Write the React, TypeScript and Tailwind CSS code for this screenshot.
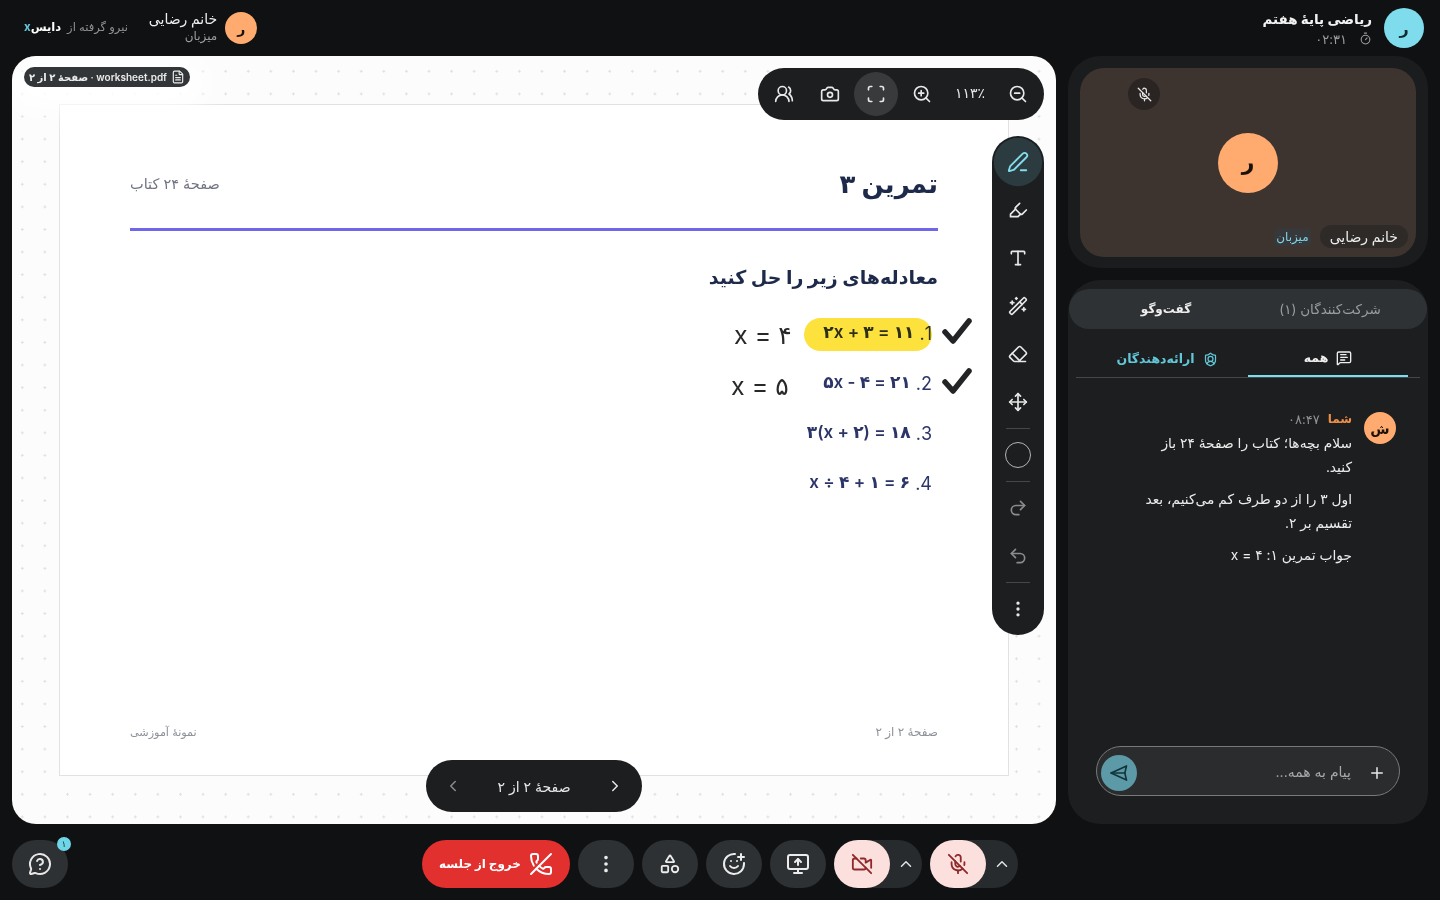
import React from "react";
import {
  UsersRound, Camera, Scan, ZoomIn, ZoomOut, Highlighter, Type, WandSparkles, Eraser, Move,
  Redo2, Undo2, EllipsisVertical, PhoneOff, Shapes, SmilePlus, MonitorUp, VideoOff, MicOff, ChevronUp,
  MessageCircleQuestion, FileText, Timer, MessageSquareText, ShieldUser, Plus, ChevronLeft, ChevronRight,
} from "lucide-react";

function ToolBtn({ children, active, dim }: { children: React.ReactNode; active?: boolean; dim?: boolean }) {
  return (
    <div className={`w-11 h-11 rounded-full flex items-center justify-center shrink-0 ${active ? "bg-[#2b3b40] text-[#82dcec] scale-110" : dim ? "text-[#8a8c8e]" : "text-[#e8e8e8]"}`}>
      {children}
    </div>
  );
}

function BarBtn({ children }: { children: React.ReactNode }) {
  return <div className="w-14 h-12 rounded-full bg-[#2e3133] text-[#ececec] flex items-center justify-center">{children}</div>;
}

function MutedBtn({ children }: { children: React.ReactNode }) {
  return (
    <div className="h-12 w-[88px] rounded-full bg-[#282b2d] flex items-center text-[#e2e2e2]">
      <div className="flex-1 flex items-center justify-center"><ChevronUp size={18} /></div>
      <div className="w-14 h-12 rounded-full bg-[#fbe0dd] text-[#8e2a2a] flex items-center justify-center">{children}</div>
    </div>
  );
}

function Equation({ n, eq }: { n: string; eq: string }) {
  return (
    <div className="h-[50px] flex items-center gap-[5px] pr-[6px] text-[17px] text-[#2c3568]">
      <span className="font-normal text-[18px]">{n}</span>
      <span dir="ltr" className="font-semibold">{eq}</span>
    </div>
  );
}

function Check({ className }: { className: string }) {
  return (
    <svg className={`absolute ${className}`} width="30" height="28" viewBox="0 0 30 28" fill="none">
      <path d="M3 15 L11 24 L27 4" stroke="#222426" strokeWidth="5.5" strokeLinecap="round" strokeLinejoin="round" />
    </svg>
  );
}

export default function App() {
  return (
    <div dir="rtl" className="w-[1440px] h-[900px] overflow-hidden bg-[#101112] text-white flex flex-col font-[family-name:Inter,'Noto_Sans','DejaVu_Sans',sans-serif]">
      <div className="h-14 shrink-0 flex items-center justify-between pr-4 pl-6">
        <div className="flex items-center gap-[12px]">
          <div className="w-10 h-10 rounded-full bg-[#7fdcec] text-[#102a30] flex items-center justify-center text-[16px] font-bold">ر</div>
          <div className="flex flex-col items-start -mt-[1px]">
            <div className="text-[13.5px] leading-5 font-bold text-[#f2f2f2]">ریاضی پایهٔ هفتم</div>
            <div className="flex items-center gap-[12px] text-[13px] tracking-[0.5px] leading-4 text-[#9b9d9f] mt-[2px]">
              <Timer size={13} />
              <span>۰۲:۳۱</span>
            </div>
          </div>
        </div>
        <div className="flex items-center gap-[21px]">
          <div className="text-[11.5px] text-[#8f9193] flex items-center gap-[6px] order-2">
            <span>نیرو گرفته از</span>
            <span className="font-bold text-white">دایس<span dir="ltr" className="text-[#62c8d8]">x</span></span>
          </div>
          <div className="flex items-center gap-2 order-1">
            <div className="w-8 h-8 rounded-full bg-[#ffaa6e] text-[#1a1208] flex items-center justify-center text-[14px] font-bold">ر</div>
            <div className="flex flex-col items-start -mt-[3px]">
              <div className="text-[14px] leading-[18px] text-[#efefef] font-medium">خانم رضایی</div>
              <div className="text-[12px] leading-4 text-[#9b9d9f]">میزبان</div>
            </div>
          </div>
        </div>
      </div>

      <div className="flex-1 min-h-0 flex gap-3 pr-3 pl-3">
        <div className="w-[360px] shrink-0 flex flex-col gap-3">
          <div className="h-[212px] rounded-[32px] bg-[#1a1c1e] pt-3 px-3 pb-[11px]">
            <div className="relative h-full rounded-[24px] bg-[#3e342f] flex items-center justify-center">
              <div className="w-[60px] h-[60px] rounded-full bg-[#ffaa6e] text-[#1a1208] flex items-center justify-center text-[22px] font-bold">ر</div>
              <div className="absolute top-[10px] left-[48px] w-8 h-8 rounded-full bg-[#2a2523] flex items-center justify-center text-[#e8e8e8]"><MicOff size={15} /></div>
              <div className="absolute bottom-[9px] right-[8px] flex items-center gap-[9px]">
                <div className="h-[23px] px-[10px] rounded-full bg-[#2e2a28] text-[14px] leading-[23px] text-[#ececec] font-medium">خانم رضایی</div>
                <div className="text-[12px] leading-[18px] px-[2px] rounded bg-[#37383a] text-[#7fd3e8]">میزبان</div>
              </div>
            </div>
          </div>

          <div className="flex-1 min-h-0 rounded-[32px] bg-[#1c1e20] flex flex-col relative pt-[9px]">
            <div className="h-10 mx-[1px] px-[15px] rounded-[20px] bg-[#2f3234] flex items-center">
              <div className="flex-1 text-center text-[13.5px] text-[#9b9d9f]">شرکت‌کنندگان (۱)</div>
              <div className="flex-1 text-center text-[12px] text-[#efefef] font-bold">گفت‌وگو</div>
            </div>
            <div className="mx-2 mt-[11px] h-[38px] flex border-b border-[#45484a] text-[12.5px] font-bold">
              <div className="w-[172px] pr-3">
                <div className="w-[160px] h-[37px] pt-[1px] border-b-2 border-[#7fdcec] flex items-center justify-center gap-2 text-[#efefef] mb-[-1px]">
                  <MessageSquareText size={16} />
                  <span>همه</span>
                </div>
              </div>
              <div className="w-[172px] h-[37px] pt-[1px] pl-[10px] flex items-center justify-center gap-2 text-[#62c8d8]">
                <ShieldUser size={15} />
                <span>ارائه‌دهندگان</span>
              </div>
            </div>
            <div className="flex gap-3 pr-8 pl-[72px] pt-[34px]">
              <div className="w-8 h-8 rounded-full bg-[#ffaa6e] text-[#1a1208] flex items-center justify-center text-[14px] font-bold shrink-0">ش</div>
              <div className="flex-1 text-[13.8px] leading-6 text-[#ececec]">
                <div className="flex items-center gap-2 text-[12px] h-[16px] -mt-[1px] mb-[4px]">
                  <span className="font-bold text-[#f08f48]">شما</span>
                  <span className="text-[13px] tracking-[0.5px] text-[#8f9193]">۰۸:۴۷</span>
                </div>
                <p>سلام بچه‌ها؛ کتاب را صفحهٔ ۲۴ باز کنید.</p>
                <p className="mt-2">اول ۳ را از دو طرف کم می‌کنیم، بعد تقسیم بر ۲.</p>
                <p className="mt-2">جواب تمرین ۱: x = ۴</p>
              </div>
            </div>
            <div className="mt-auto mx-7 mb-7 h-[50px] rounded-full border border-[#77797b] bg-[#2a2c2e] flex items-center pr-[13px] pl-1">
              <Plus size={18} className="text-[#e8e8e8] mt-1" />
              <div className="mr-[17px] flex-1 text-[14px] text-[#a6a8aa]">پیام به همه...</div>
              <div className="w-9 h-9 mt-1 rounded-full bg-[#5b9aa6] flex items-center justify-center text-[#15343c]">
                <svg width="20" height="20" viewBox="0 0 24 24" fill="none" stroke="currentColor" strokeWidth="2" strokeLinejoin="round" strokeLinecap="round">
                  <path d="M2.5 12 L21 3.5 L19 12 L21 20.5 Z" />
                  <path d="M2.5 12 H19" />
                </svg>
              </div>
            </div>
          </div>
        </div>

        <div className="relative flex-1 min-w-0 rounded-[24px] overflow-hidden bg-[#fcfcfc] bg-[radial-gradient(circle,#e0e0e0_1px,transparent_1.2px)] bg-[length:22.6px_22.6px] bg-[position:-1px_4px] px-[47px] pt-[48px] pb-[48px]">
          <div className="h-full bg-white border border-[#e2e2e2] px-[70px] flex flex-col">
            <div className="h-[126px] shrink-0 border-b-[3px] border-[#6f66e8] flex items-center justify-between pt-[52px] pb-[18px]">
              <div className="text-[26px] font-bold text-[#1e2a4a]">تمرین ۳</div>
              <div className="text-[14.5px] text-[#6f7480]">صفحهٔ ۲۴ کتاب</div>
            </div>
            <div className="mt-[29px] text-[19px] leading-9 font-bold text-[#1e2a4a]">معادله‌های زیر را حل کنید</div>
            <div className="mt-[12px]">
              <Equation n="1." eq="۲x + ۳ = ۱۱" />
              <Equation n="2." eq="۵x - ۴ = ۲۱" />
              <Equation n="3." eq="۳(x + ۲) = ۱۸" />
              <Equation n="4." eq="x ÷ ۴ + ۱ = ۶" />
            </div>
            <div className="mt-auto mb-[34px] flex justify-between items-center text-[12px] text-[#8d9199]">
              <span>صفحهٔ ۲ از ۲</span>
              <span className="text-[11.2px]">نمونهٔ آموزشی</span>
            </div>
          </div>

          <div className="absolute left-[792px] top-[262px] w-[128px] h-[33px] rounded-[17px] bg-[#fde13c] mix-blend-multiply" />
          <Check className="left-[930px] top-[261px]" />
          <Check className="left-[930px] top-[311px]" />
          <div dir="ltr" className="absolute left-[722px] top-[261px] text-[25px] leading-9 text-[#26282a]">x = ۴</div>
          <div dir="ltr" className="absolute left-[719px] top-[312px] text-[25px] leading-9 text-[#26282a]">x = ۵</div>

          <div dir="ltr" className="absolute left-[12px] top-[11px] h-5 w-[166px] rounded-full bg-[#333638] text-[#ececec] flex items-center justify-center gap-1 text-[10px] font-semibold shadow-[0_6px_30px_16px_#ffffff]">
            <span dir="rtl">worksheet.pdf · صفحهٔ ۲ از ۲</span>
            <FileText size={14} />
          </div>

          <div className="absolute top-[12px] right-[12px] h-[52px] rounded-full bg-[#1c1e20] p-1 flex items-center gap-[2px]">
            <ToolBtn><ZoomOut size={20} /></ToolBtn>
            <div className="w-12 -mt-1 text-center text-[14px] text-[#e8e8e8]">۱۱۳٪</div>
            <ToolBtn><ZoomIn size={20} /></ToolBtn>
            <div className="w-11 h-11 rounded-full bg-[#383a3c] text-[#e8e8e8] flex items-center justify-center"><Scan size={20} /></div>
            <ToolBtn><Camera size={20} /></ToolBtn>
            <ToolBtn><UsersRound size={20} /></ToolBtn>
          </div>

          <div className="absolute top-[80px] right-[12px] w-[52px] rounded-[26px] bg-[#1c1e20] py-1 flex flex-col items-center gap-1">
            <ToolBtn active>
              <svg width="20" height="20" viewBox="0 0 24 24" fill="none" stroke="currentColor" strokeWidth="2" strokeLinecap="round" strokeLinejoin="round">
                <path d="M21.174 6.812a1 1 0 0 0-3.986-3.987L3.842 16.174a2 2 0 0 0-.5.83l-1.321 4.352a.5.5 0 0 0 .623.622l4.353-1.32a2 2 0 0 0 .83-.497z" />
                <path d="M15 21h6" />
              </svg>
            </ToolBtn>
            <ToolBtn><Highlighter size={20} /></ToolBtn>
            <ToolBtn><Type size={20} /></ToolBtn>
            <ToolBtn><WandSparkles size={20} /></ToolBtn>
            <ToolBtn><Eraser size={20} /></ToolBtn>
            <ToolBtn><Move size={20} /></ToolBtn>
            <div className="w-6 h-px bg-[#45484a]" />
            <div className="w-[26px] h-[26px] my-[9px] rounded-full border border-[#b5b5b5]" />
            <div className="w-6 h-px bg-[#45484a]" />
            <ToolBtn dim><Redo2 size={20} /></ToolBtn>
            <ToolBtn dim><Undo2 size={20} /></ToolBtn>
            <div className="w-6 h-px bg-[#45484a]" />
            <ToolBtn><EllipsisVertical size={20} /></ToolBtn>
          </div>

          <div className="absolute left-[414px] top-[704px] w-[216px] h-[52px] rounded-full bg-[#1c1e20] flex items-center justify-between px-[18px] text-[#e8e8e8] text-[14px]">
            <ChevronRight size={18} />
            <span>صفحهٔ ۲ از ۲</span>
            <ChevronLeft size={18} className="text-[#8a8c8e]" />
          </div>
        </div>
      </div>

      <div className="h-[76px] shrink-0 grid grid-cols-[1fr_auto_1fr] items-start pt-4 px-3">
        <div />
        <div className="flex items-center gap-2">
          <MutedBtn><MicOff size={22} /></MutedBtn>
          <MutedBtn><VideoOff size={22} /></MutedBtn>
          <BarBtn><MonitorUp size={24} /></BarBtn>
          <BarBtn><SmilePlus size={24} /></BarBtn>
          <BarBtn><Shapes size={22} /></BarBtn>
          <BarBtn><EllipsisVertical size={22} /></BarBtn>
          <div className="w-[148px] h-12 rounded-full bg-[#e1302e] flex items-center justify-center gap-2 text-[12px] font-bold text-white">
            <PhoneOff size={24} />
            <span>خروج از جلسه</span>
          </div>
        </div>
        <div className="flex justify-end">
          <div className="relative w-14 h-12 rounded-full bg-[#2e3133] text-[#e8e8e8] flex items-center justify-center">
            <MessageCircleQuestion size={24} />
            <div dir="ltr" className="absolute -top-[3px] right-[-3px] w-[14px] h-[14px] rounded-full bg-[#6fd6e8] text-[#17333a] text-[9px] leading-[14px] text-center">۱</div>
          </div>
        </div>
      </div>
    </div>
  );
}
